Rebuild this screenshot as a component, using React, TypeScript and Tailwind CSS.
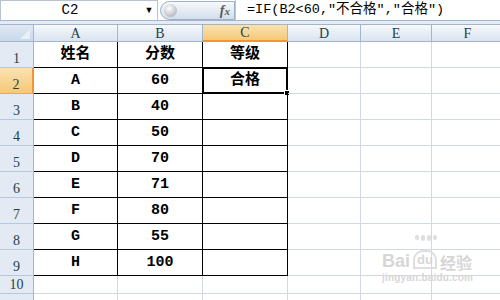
import React from 'react'

const cols = [
  { key: 'A', w: 'w-[84px]' },
  { key: 'B', w: 'w-[85px]' },
  { key: 'C', w: 'w-[85px]' },
  { key: 'D', w: 'w-[73px]' },
  { key: 'E', w: 'w-[71px]' },
  { key: 'F', w: 'w-[72px]' },
]

const data: string[][] = [
  ['姓名', '分数', '等级'],
  ['A', '60', '合格'],
  ['B', '40', ''],
  ['C', '50', ''],
  ['D', '70', ''],
  ['E', '71', ''],
  ['F', '80', ''],
  ['G', '55', ''],
  ['H', '100', ''],
]

const cellFont = "font-['Liberation_Mono','Noto_Sans_CJK_SC',monospace]"
const headFont = "font-['Liberation_Serif','Noto_Sans_CJK_SC',serif]"

function FormulaBar() {
  return (
    <div className="flex h-[21px] border-b border-[#a3b5cd] bg-white">
      <div className={`flex w-[158px] items-center justify-center border border-b-0 border-[#b7c3d3] pr-[18px] text-[14px] text-black ${cellFont}`}>
        C2
      </div>
      <div className="flex w-[18px] -ml-[18px] items-center justify-center text-[9px] text-black">▼</div>
      <div className="ml-[2px] mt-[1px] flex h-[19px] w-[75px] items-center justify-between rounded-l-full border border-[#9fb1c8] bg-gradient-to-b from-[#f7f9fc] to-[#d3deeb] pl-[3px] pr-[4px]">
        <div className="h-[13px] w-[13px] rounded-full bg-[radial-gradient(circle_at_40%_35%,#ffffff,#b9bec6_70%,#8e949c)]" />
        <span className="font-['Liberation_Serif',serif] text-[14px] font-bold italic leading-none text-[#5a5a5a]">
          f<span className="text-[11px]">x</span>
        </span>
      </div>
      <div className="w-px bg-[#b9c6d6]" />
      <div className={`flex items-center pl-[11px] text-[13.5px] text-black ${cellFont}`}>
        =IF(B2&lt;60,″不合格″,″合格″)
      </div>
    </div>
  )
}

function ColumnHeaders() {
  return (
    <div className="flex h-[17px]">
      <div className="relative w-[34px] shrink-0 border-r border-b border-[#9eb6ce] bg-gradient-to-b from-[#dfe8f4] to-[#c9d8ea]">
        <div className="absolute bottom-[2px] right-[3px] h-0 w-0 border-b-[10px] border-l-[10px] border-b-[#e9eff7] border-l-transparent" />
      </div>
      {cols.map((c) => {
        const sel = c.key === 'C'
        return (
          <div
            key={c.key}
            className={`${c.w} flex shrink-0 items-center justify-center border-r text-[14px] text-[#24414a] ${headFont} ${
              sel
                ? 'border-b-2 border-r-[#f2a654] border-b-[#f29536] bg-gradient-to-b from-[#fae2b0] to-[#f5c977]'
                : 'border-b border-[#9eb6ce] bg-gradient-to-b from-[#f6f8fc] to-[#dae3ef]'
            }`}
          >
            {c.key}
          </div>
        )
      })}
    </div>
  )
}

function RowHeader({ n, sel }: { n?: number; sel?: boolean }) {
  return (
    <div
      className={`flex w-[34px] shrink-0 items-end justify-center pb-[1px] text-[14px] leading-none text-[#24414a] ${headFont} border-b ${
        sel
          ? 'border-r-2 border-r-[#f29536] border-b-[#f2a654] bg-gradient-to-b from-[#fae2b0] to-[#f5c977]'
          : 'border-r border-r-[#9eb6ce] border-b-[#b6c8de] bg-[#e3eaf4]'
      }`}
    >
      {n}
    </div>
  )
}

function DataRow({ n, vals }: { n: number; vals: string[] }) {
  return (
    <div className="flex h-[26px]">
      <RowHeader n={n} sel={n === 2} />
      {cols.map((c, i) => {
        const inTable = i < 3
        const v = vals[i] ?? ''
        return (
          <div
            key={c.key}
            className={`${c.w} relative flex shrink-0 items-center justify-center pt-[1px] text-[15px] font-bold text-black ${cellFont} border-r border-b ${
              inTable ? 'border-black' : 'border-[#d0d7e5]'
            }`}
          >
            {v}
            {n === 2 && c.key === 'C' && (
              <div className="absolute -left-px -top-px h-[27px] w-[86px] border-2 border-black">
                <div className="absolute inset-0 border border-white" />
                <div className="absolute -bottom-[4px] -right-[4px] h-[6px] w-[6px] border border-white bg-black" />
              </div>
            )}
          </div>
        )
      })}
    </div>
  )
}

function EmptyRow({ n, h }: { n?: number; h: string }) {
  return (
    <div className={`flex ${h}`}>
      <RowHeader n={n} />
      {cols.map((c) => (
        <div key={c.key} className={`${c.w} shrink-0 border-r border-b border-[#d0d7e5]`} />
      ))}
    </div>
  )
}

function Watermark() {
  return (
    <div className="pointer-events-none absolute left-[382px] top-[246px] select-none text-[#d6d6d6]">
      <div className="flex items-end gap-[3px]">
        <span className="font-['Liberation_Sans',sans-serif] text-[18px] font-bold leading-none">Bai</span>
        <div className="relative">
          <div className="absolute -top-[11px] left-[2px] flex gap-[2px]">
            <span className="h-[5px] w-[4px] rounded-full bg-[#dedede]" />
            <span className="h-[6px] w-[4px] rounded-full bg-[#dedede]" />
            <span className="h-[6px] w-[4px] rounded-full bg-[#dedede]" />
            <span className="h-[5px] w-[4px] rounded-full bg-[#dedede]" />
          </div>
          <span className="rounded-t-[10px] border-2 border-[#dedede] px-[2px] font-['Liberation_Sans',sans-serif] text-[13px] font-bold leading-none">
            du
          </span>
        </div>
        <span className="font-['Noto_Sans_CJK_SC',sans-serif] text-[16px] font-bold leading-none">经验</span>
      </div>
      <div className="mt-[3px] font-['Liberation_Sans',sans-serif] text-[10px] font-bold leading-none tracking-[0.2px]">
        jingyan.baidu.com
      </div>
    </div>
  )
}

export default function App() {
  return (
    <div className="relative h-[300px] w-[500px] overflow-hidden bg-white">
      <FormulaBar />
      <div className="h-[4px] border-b border-[#a0b4cc] bg-[#e4ebf5]" />
      <ColumnHeaders />
      {data.map((vals, i) => (
        <DataRow key={i} n={i + 1} vals={vals} />
      ))}
      <EmptyRow n={10} h="h-[18px]" />
      <EmptyRow h="h-[18px]" />
      <Watermark />
    </div>
  )
}
